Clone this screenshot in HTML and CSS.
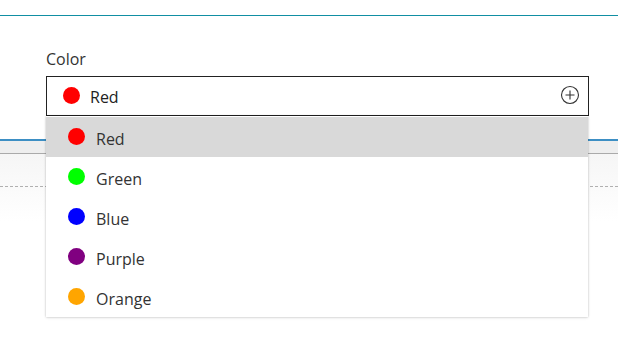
FILE: index.html
```html
<!DOCTYPE html>
<html>
<head>
<meta charset="utf-8">
<link rel="stylesheet" href="styles.css">
</head>
<body>
<div class="topbar"></div>
<div class="field">
  <div class="label">Color</div>
  <div class="select">
    <span class="dot" style="background:#ff0000"></span>
    <span class="value">Red</span>
    <svg class="plus" width="20" height="20" viewBox="0 0 20 20"><circle cx="10" cy="10" r="8.5" fill="none" stroke="#333" stroke-width="1.1"/><path d="M10 5.5v9M5.5 10h9" stroke="#333" stroke-width="1.1"/></svg>
  </div>
  <ul class="menu">
    <li class="item active"><span class="dot" style="background:#ff0000"></span>Red</li>
    <li class="item"><span class="dot" style="background:#00ff00"></span>Green</li>
    <li class="item"><span class="dot" style="background:#0000ff"></span>Blue</li>
    <li class="item"><span class="dot" style="background:#800080"></span>Purple</li>
    <li class="item"><span class="dot" style="background:#ffa500"></span>Orange</li>
  </ul>
</div>
<div class="backdrop">
  <div class="band"></div>
  <div class="dashed"></div>
</div>
</body>
</html>
```
FILE: styles.css
```css
html, body { margin: 0; padding: 0; }
body {
  width: 618px;
  height: 341px;
  overflow: hidden;
  background: #fff;
  font-family: "Open Sans", "Noto Sans", sans-serif;
  position: relative;
}
.topbar {
  height: 15px;
  border-bottom: 1px solid #118fa3;
}
.field {
  position: relative;
  padding: 32px 29px 0 46px;
  z-index: 2;
}
.label {
  font-size: 16px;
  line-height: 22px;
  color: #333;
  height: 28px;
}
.select {
  box-sizing: border-box;
  height: 40px;
  border: 1px solid #222;
  background: #fff;
  display: flex;
  align-items: center;
  padding: 0 8px 0 16px;
}
.select .dot { margin-right: 10px; margin-top: -2px; }
.value {
  font-size: 16px;
  color: #222;
  flex: 1;
  padding-top: 2px;
}
.plus { display: block; margin-top: -2px; }
.dot {
  display: inline-block;
  width: 17px;
  height: 17px;
  border-radius: 50%;
  flex: none;
}
.menu {
  position: absolute;
  left: 46px;
  top: 100px;
  width: 542px;
  margin: 0;
  padding: 1px 0 0;
  list-style: none;
  background: #fff;
  box-shadow: 0 0 2px rgba(0,0,0,0.22), 0 1px 3px rgba(0,0,0,0.08);
}
.item {
  box-sizing: border-box;
  height: 40px;
  display: flex;
  align-items: center;
  padding: 3px 0 0 22px;
  font-size: 16px;
  color: #333;
}
.item .dot { margin-right: 11px; margin-top: -4px; }
.item.active { background: #d9d9d9; }
.backdrop {
  margin-top: 23px;
  height: 80px;
  border-top: 2px solid #3d8fc4;
  background: linear-gradient(#f4f4f4, #ffffff);
  position: relative;
  z-index: 1;
}
.band {
  height: 12px;
  background: #eeeeee;
  border-bottom: 1px solid #aaa;
}
.dashed {
  margin-top: 32px;
  border-top: 1px dashed #b0b0b0;
}
```
